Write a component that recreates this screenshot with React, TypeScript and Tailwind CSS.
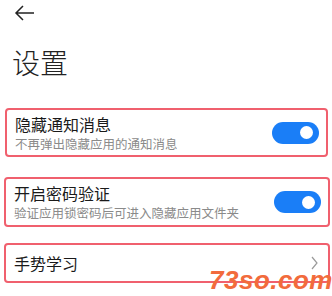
import React from "react";

const cjk = { fontFamily: '"Noto Sans CJK SC", "Noto Sans", sans-serif' };

const Toggle = () => (
  <div className="flex h-[22px] w-[47px] shrink-0 items-center justify-end rounded-full bg-[#1a7ef7] pr-[6px]">
    <div className="h-[13px] w-[13px] rounded-full bg-white" />
  </div>
);

const Row = ({
  title,
  desc,
  className,
}: {
  title: string;
  desc: string;
  className: string;
}) => (
  <div
    className={`flex items-center justify-between rounded-[4px] border-2 border-[#f0606e] pl-[8px] pr-[7px] ${className}`}
  >
    <div className="flex flex-col">
      <p className="text-[16px] leading-[20px] text-[#1a1a1a]">{title}</p>
      <p className="mt-[2px] text-[12.5px] leading-[16px] text-[#8a8a8a]">{desc}</p>
    </div>
    <Toggle />
  </div>
);

export default function App() {
  return (
    <div className="relative h-[296px] w-[332px] overflow-hidden bg-white" style={cjk}>
      <div className="pl-[14px] pt-[4px]">
        <svg width="22" height="18" viewBox="0 0 22 18" fill="none">
          <path d="M2 9h18M9 2L2 9l7 7" stroke="#222" strokeWidth="1.5" />
        </svg>
      </div>
      <h1 className="ml-[12px] mt-[26px] text-[28px] font-light leading-[28px] text-[#222]">设置</h1>

      <Row
        className="mx-[5px] mt-[32px] h-[49px] w-[323px]"
        title="隐藏通知消息"
        desc="不再弹出隐藏应用的通知消息"
      />
      <Row
        className="ml-[4px] mt-[20px] h-[50px] w-[326px]"
        title="开启密码验证"
        desc="验证应用锁密码后可进入隐藏应用文件夹"
      />
      <div className="ml-[4px] mt-[16px] flex h-[40px] w-[326px] items-center justify-between rounded-[4px] border-2 border-[#f0606e] pl-[8px] pr-[10px]">
        <p className="text-[16px] leading-[20px] text-[#1a1a1a]">手势学习</p>
        <svg width="7" height="14" viewBox="0 0 7 14" fill="none">
          <path d="M1 1l5 6-5 6" stroke="#9a9a9a" strokeWidth="1.2" />
        </svg>
      </div>

      <div
        className="absolute left-[209px] top-[267px] text-[26px] font-bold italic leading-none tracking-[0.5px] text-[#f26b3c]"
        style={{ fontFamily: '"Liberation Sans", Arial, sans-serif' }}
      >
        73so.com
      </div>
    </div>
  );
}
